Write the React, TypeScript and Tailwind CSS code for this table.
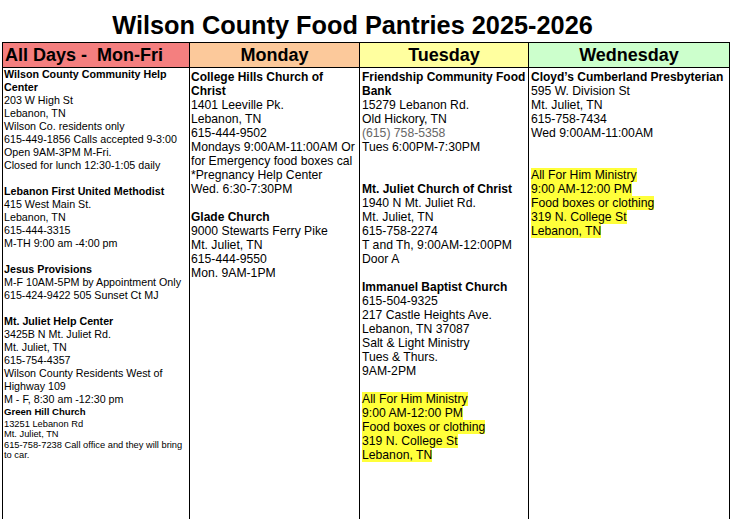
import React from 'react';

type Line = {
  text: string;
  bold?: boolean;
  hl?: boolean;
  muted?: boolean;
  cls?: string;
} | null;

const allDays: Line[] = [
  { text: 'Wilson County Community Help', bold: true },
  { text: 'Center', bold: true },
  { text: '203 W High St' },
  { text: 'Lebanon, TN' },
  { text: 'Wilson Co. residents only' },
  { text: '615-449-1856 Calls accepted 9-3:00' },
  { text: 'Open 9AM-3PM M-Fri.' },
  { text: 'Closed for lunch 12:30-1:05 daily' },
  null,
  { text: 'Lebanon First United Methodist', bold: true },
  { text: '415 West Main St.' },
  { text: 'Lebanon, TN' },
  { text: '615-444-3315' },
  { text: 'M-TH 9:00 am -4:00 pm' },
  null,
  { text: 'Jesus Provisions', bold: true },
  { text: 'M-F 10AM-5PM by Appointment Only' },
  { text: '615-424-9422 505 Sunset Ct MJ' },
  null,
  { text: 'Mt. Juliet Help Center', bold: true },
  { text: '3425B N Mt. Juliet Rd.' },
  { text: 'Mt. Juliet, TN' },
  { text: '615-754-4357' },
  { text: 'Wilson County Residents West of' },
  { text: 'Highway 109' },
  { text: 'M - F, 8:30 am -12:30 pm' },
  { text: 'Green Hill Church', bold: true, cls: 'text-[9.6px] leading-[12.5px]' },
  { text: '13251 Lebanon Rd', cls: 'text-[9.3px] leading-[10.5px]' },
  { text: 'Mt. Juliet, TN', cls: 'text-[9.3px] leading-[10.5px]' },
  { text: '615-758-7238 Call office and they will bring', cls: 'text-[9.3px] leading-[10.5px]' },
  { text: 'to car.', cls: 'text-[9.3px] leading-[10.5px]' },
];

const allForHim: Line[] = [
  { text: 'All For Him Ministry', hl: true },
  { text: '9:00 AM-12:00 PM', hl: true },
  { text: 'Food boxes or clothing', hl: true },
  { text: '319 N. College St', hl: true },
  { text: 'Lebanon, TN', hl: true },
];

const monday: Line[] = [
  { text: 'College Hills Church of', bold: true },
  { text: 'Christ', bold: true },
  { text: '1401 Leeville Pk.' },
  { text: 'Lebanon, TN' },
  { text: '615-444-9502' },
  { text: 'Mondays 9:00AM-11:00AM Or' },
  { text: 'for Emergency food boxes cal' },
  { text: '*Pregnancy Help Center' },
  { text: 'Wed. 6:30-7:30PM' },
  null,
  { text: 'Glade Church', bold: true },
  { text: '9000 Stewarts Ferry Pike' },
  { text: 'Mt. Juliet, TN' },
  { text: '615-444-9550' },
  { text: 'Mon. 9AM-1PM' },
];

const tuesday: Line[] = [
  { text: 'Friendship Community Food', bold: true },
  { text: 'Bank', bold: true },
  { text: '15279 Lebanon Rd.' },
  { text: 'Old Hickory, TN' },
  { text: '(615) 758-5358', muted: true },
  { text: 'Tues 6:00PM-7:30PM' },
  null,
  null,
  { text: 'Mt. Juliet Church of Christ', bold: true },
  { text: '1940 N Mt. Juliet Rd.' },
  { text: 'Mt. Juliet, TN' },
  { text: '615-758-2274' },
  { text: 'T and Th, 9:00AM-12:00PM' },
  { text: 'Door A' },
  null,
  { text: 'Immanuel Baptist Church', bold: true },
  { text: '615-504-9325' },
  { text: '217 Castle Heights Ave.' },
  { text: 'Lebanon, TN 37087' },
  { text: 'Salt & Light Ministry' },
  { text: 'Tues & Thurs.' },
  { text: '9AM-2PM' },
  null,
  ...allForHim,
];

const wednesday: Line[] = [
  { text: 'Cloyd\u2019s Cumberland Presbyterian', bold: true },
  { text: '595 W. Division St' },
  { text: 'Mt. Juliet, TN' },
  { text: '615-758-7434' },
  { text: 'Wed 9:00AM-11:00AM' },
  null,
  null,
  ...allForHim,
];

const columns = [
  { title: 'All Days -  Mon-Fri', bg: 'bg-[#f47f7f]', align: 'text-left pl-[2px]', lines: allDays, body: 'text-[10.7px] leading-[13px] pl-[1px] pt-0', bold: '', blank: 'h-[13px]' },
  { title: 'Monday', bg: 'bg-[#fcc99b]', align: 'text-center', lines: monday, body: 'text-[12.2px] leading-[14px] pl-[1px] pt-[2px]', bold: 'text-[12px]', blank: 'h-[14px]' },
  { title: 'Tuesday', bg: 'bg-[#ffff9f]', align: 'text-center', lines: tuesday, body: 'text-[12.2px] leading-[14px] pl-[2px] pt-[2px]', bold: 'text-[12px]', blank: 'h-[14px]' },
  { title: 'Wednesday', bg: 'bg-[#ccffcc]', align: 'text-center', lines: wednesday, body: 'text-[12.2px] leading-[14px] pl-[2px] pt-[2px]', bold: 'text-[12px]', blank: 'h-[14px]' },
];

const App: React.FC = () => {
  return (
    <div className="w-[730px] h-[519px] overflow-hidden bg-white text-black font-['Liberation_Sans',Arial,sans-serif]">
      {/* Title */}
      <div className="h-[42px] pt-[13px] pr-[25px] flex justify-center">
        <h1 className="text-[25.3px] leading-[25px] font-bold whitespace-nowrap">
          Wilson County Food Pantries 2025-2026
        </h1>
      </div>

      {/* Table */}
      <div className="ml-[2px] w-[728px] grid grid-cols-[187px_170px_169px_202px] border-t border-black">
        {columns.map((col, i) => (
          <div
            key={`h-${i}`}
            className={`h-[25px] border-l border-b border-black ${i === 3 ? 'border-r' : ''} ${col.bg} ${col.align} text-[18px] leading-[24px] font-bold whitespace-pre`}
          >
            {col.title}
          </div>
        ))}
        {columns.map((col, i) => (
          <div
            key={`b-${i}`}
            className={`h-[460px] border-l border-black ${i === 3 ? 'border-r' : ''} ${col.body} overflow-hidden`}
          >
            {col.lines.map((line, j) =>
              line === null ? (
                <div key={j} className={col.blank} />
              ) : (
                <div
                  key={j}
                  className={`whitespace-nowrap ${line.bold ? `font-bold ${col.bold}` : ''} ${line.muted ? 'text-[#666666]' : ''} ${line.cls ?? ''}`}
                >
                  {line.hl ? <span className="bg-[#ffff3a]">{line.text}</span> : line.text}
                </div>
              )
            )}
          </div>
        ))}
      </div>
    </div>
  );
};

export default App;
